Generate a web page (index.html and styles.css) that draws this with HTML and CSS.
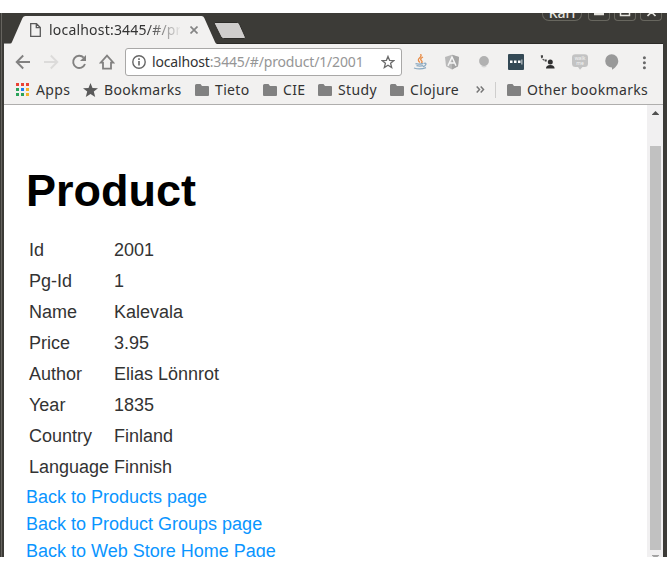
FILE: index.html
```html
<!DOCTYPE html>
<html lang="en">
<head>
<meta charset="utf-8">
<title>Product</title>
<link rel="stylesheet" href="styles.css">
</head>
<body>
<div class="window">
  <header class="titlebar">
    <div class="tab">
      <svg class="tab-shape" width="214" height="31" viewBox="0 0 214 31"><path d="M0 31V30.500H6Q7.500 30.500 8 29L18.500 5Q19.500 3 21.500 3H197.500Q199.500 3 200.300 5L211 29Q211.500 30.500 213 31Z" fill="#f2f1f0"/></svg>
      <svg class="page-icon" width="11" height="14" viewBox="0 0 11 14"><path d="M.7.7H6.5L10.3 4.5V13.3H.7ZM6.3.7V4.7H10.3" fill="none" stroke="#5a5a5a" stroke-width="1.3"/></svg>
      <span class="tab-title">localhost:3445/#/pr</span>
      <svg class="tab-close" width="8" height="8" viewBox="0 0 8 8"><path d="M.5.5 7.5 7.5M7.5.5.5 7.5" stroke="#858585" stroke-width="1.7"/></svg>
    </div>
    <svg class="new-tab" width="40" height="31" viewBox="0 0 40 31"><path d="M7.500 9.500H30.500Q31.800 9.500 32.500 11L38.300 24Q38.800 25.500 37.300 25.500H16.500Q14.800 25.500 14 24L7.500 11Q6.800 9.500 7.500 9.500Z" fill="#cfcdcc" stroke="#2d2c29" stroke-width="1"/></svg>
    <div class="controls">
      <span class="control user">Kari</span>
      <span class="control"><svg width="20" height="8"><path d="M5 1H15" stroke="#e5e4df" stroke-width="2.400"/></svg></span>
      <span class="control"><svg width="20" height="8"><path d="M5.500 0V2.500H14.500V0" fill="none" stroke="#e5e4df" stroke-width="1.500"/></svg></span>
      <span class="control"><svg width="20" height="8"><path d="M6.500 3 10.500-1 14.500 3" fill="none" stroke="#e5e4df" stroke-width="1.700"/></svg></span>
    </div>
  </header>

  <nav class="toolbar">
    <svg class="icon" viewBox="0 0 16 16"><path d="M15 8H2M8.200 1.500 1.700 8l6.500 6.500" fill="none" stroke="#828180" stroke-width="1.900"/></svg>
    <svg class="icon" viewBox="0 0 16 16"><path d="M1 8H14M7.800 1.500 14.300 8l-6.500 6.500" fill="none" stroke="#dcdbda" stroke-width="1.900"/></svg>
    <svg class="icon" viewBox="0 0 16 16"><path d="M12.700 3.700A6.100 6.100 0 1 0 14 10" fill="none" stroke="#828180" stroke-width="1.900"/><path d="M15 1V7H9Z" fill="#828180"/></svg>
    <svg class="icon home" viewBox="0 0 16 16"><path d="M8 1.600 1.600 8.700H4V14.600H12V8.700H14.400Z" fill="none" stroke="#828180" stroke-width="1.800"/></svg>
    <div class="address">
      <svg width="14" height="14" viewBox="0 0 14 14"><circle cx="7" cy="7" r="6.200" fill="none" stroke="#666" stroke-width="1.400"/><path d="M7 6V10.500M7 3.300V4.900" stroke="#666" stroke-width="1.600"/></svg>
      <span class="url"><b>localhost</b>:3445/#/product/1/2001</span>
      <svg class="star" width="14" height="14" viewBox="0 0 14 14"><path d="M7 1.400 8.600 5.300 12.900 5.600 9.600 8.300 10.700 12.500 7 10.200 3.300 12.500 4.400 8.300 1.100 5.600 5.400 5.300Z" fill="none" stroke="#6b6b6b" stroke-width="1.300"/></svg>
    </div>
    <div class="extensions">
      <svg class="icon" viewBox="0 0 16 16"><path d="M8.500 0Q10 2 7.500 4T8 8.500M11 3Q7.500 4.800 9.300 6.500T9 9" fill="none" stroke="#e88b45" stroke-width="1.300"/><path d="M3.500 9.700Q7 10.500 11 9.500M4.500 11.700Q8 12.600 11 11.700M2 14Q8 16 14 13.700M11.500 9.500Q14.500 8.600 13.800 10.500T11 12.500" fill="none" stroke="#8ba9c1" stroke-width="1.300"/></svg>
      <svg class="icon" viewBox="0 0 16 16"><path d="M8 .7 15 3 14 12.200 8 15.500 2 12.200 1 3Z" fill="#b9b9b9"/><path d="M8 .7 15 3 14 12.200 8 15.500Z" fill="#a5a5a5"/><path d="M4 11.700 8 3 12 11.700M5.600 9H10.400" fill="none" stroke="#f6f6f6" stroke-width="1.500"/></svg>
      <svg class="icon" viewBox="0 0 16 16"><path d="M5.500 10H10.500V12.500Q8 14.500 5.500 12.500Z" fill="#d5d5d5"/><circle cx="8" cy="7" r="4.900" fill="#b1b1b1"/></svg>
      <svg class="icon" viewBox="0 0 16 16"><rect width="16" height="16" rx="1" fill="#344955"/><path d="M2 6.500H4.500V9H2ZM6 6.500H8.500V9H6ZM10 6.500H12.500V9H10ZM13.500 5.500H14.300V10.500H13.500Z" fill="#fff"/></svg>
      <svg class="icon" viewBox="0 0 16 16"><path d="M1.500 2Q1.800 6 6 6.700" fill="none" stroke="#444" stroke-width="1.200" stroke-dasharray="2.300 1"/><path d="M.8 1.200H3V3.500H1ZM4.800 5.500H6.700V7.500H4.800Z" fill="#444"/><circle cx="10.300" cy="8" r="2.500" fill="#303030"/><path d="M6 14.500Q6 11 10.300 11T14.600 14.500Z" fill="#303030"/></svg>
      <svg class="icon" viewBox="0 0 16 16"><path d="M3.500.2H12.500Q16 .2 16 3.500V9.500Q16 13 12.500 13H10.500L8 15.800 6 13H3.500Q0 13 0 9.500V3.500Q0 .2 3.500.2Z" fill="#c3c3c3"/><text class="badge-text" x="8" y="5.800" text-anchor="middle">walk</text><text class="badge-text" x="8" y="11" text-anchor="middle">me</text></svg>
      <svg class="icon" viewBox="0 0 16 16"><path d="M7.600.3A6.600 6.600 0 0 1 14.300 7C14.300 10.500 11 14.200 8 15.800V13.500A6.600 6.600 0 0 1 7.600.3Z" fill="#999"/></svg>
      <svg class="icon" viewBox="0 0 16 16"><g fill="#686868"><circle cx="8.400" cy="3.700" r="1.500"/><circle cx="8.400" cy="8.700" r="1.500"/><circle cx="8.400" cy="13.700" r="1.500"/></g></svg>
    </div>
  </nav>

  <nav class="bookmarks">
    <svg width="13" height="13" viewBox="0 0 13 13"><path d="M0 0H3V3H0ZM5 0H8V3H5ZM10 0H13V3H10Z" fill="#ea4335"/><path d="M0 5H3V8H0ZM0 10H3V13H0ZM5 10H8V13H5Z" fill="#2ba35a"/><path d="M5 5H8V8H5Z" fill="#1a80f0"/><path d="M10 5H13V8H10ZM10 10H13V13H10Z" fill="#f3b32a"/></svg>
    <span>Apps</span>
    <svg width="15" height="14" viewBox="0 0 15 14"><path d="M7.500 0 9.500 4.900 15 5.200 10.800 8.600 12.200 14 7.500 11 2.800 14 4.200 8.600 0 5.200 5.500 4.900Z" fill="#5a5a5a"/></svg>
    <span>Bookmarks</span>
    <svg class="folder" viewBox="0 0 14 12"><path d="M1.500 0H5.500L7 2H13Q14 2 14 3V11Q14 12 13 12H1Q0 12 0 11V1.500Q0 0 1.500 0Z"/></svg>
    <span>Tieto</span>
    <svg class="folder" viewBox="0 0 14 12"><path d="M1.500 0H5.500L7 2H13Q14 2 14 3V11Q14 12 13 12H1Q0 12 0 11V1.500Q0 0 1.500 0Z"/></svg>
    <span>CIE</span>
    <svg class="folder" viewBox="0 0 14 12"><path d="M1.500 0H5.500L7 2H13Q14 2 14 3V11Q14 12 13 12H1Q0 12 0 11V1.500Q0 0 1.500 0Z"/></svg>
    <span>Study</span>
    <svg class="folder" viewBox="0 0 14 12"><path d="M1.500 0H5.500L7 2H13Q14 2 14 3V11Q14 12 13 12H1Q0 12 0 11V1.500Q0 0 1.500 0Z"/></svg>
    <span>Clojure</span>
    <svg width="9" height="7" viewBox="0 0 9 7"><path d="M.7.5 3.500 3.500.7 6.500M4.700.5 7.500 3.500 4.700 6.500" fill="none" stroke="#777" stroke-width="1.500"/></svg>
    <i class="separator"></i>
    <svg class="folder" viewBox="0 0 14 12"><path d="M1.500 0H5.500L7 2H13Q14 2 14 3V11Q14 12 13 12H1Q0 12 0 11V1.500Q0 0 1.500 0Z"/></svg>
    <span class="other">Other bookmarks</span>
  </nav>

  <div class="viewport">
    <main class="content">
      <h1>Product</h1>
      <table>
        <tr><td>Id</td><td>2001</td></tr>
        <tr><td>Pg-Id</td><td>1</td></tr>
        <tr><td>Name</td><td>Kalevala</td></tr>
        <tr><td>Price</td><td>3.95</td></tr>
        <tr><td>Author</td><td>Elias Lönnrot</td></tr>
        <tr><td>Year</td><td>1835</td></tr>
        <tr><td>Country</td><td>Finland</td></tr>
        <tr><td>Language</td><td>Finnish</td></tr>
      </table>
      <a href="#/products">Back to Products page</a>
      <a href="#/groups">Back to Product Groups page</a>
      <a href="#/">Back to Web Store Home Page</a>
    </main>
    <div class="scrollbar">
      <svg width="7" height="4" viewBox="0 0 7 4"><path d="M3.500 0 7 3.500V4H0V3.500Z" fill="#505050"/></svg>
      <div class="thumb"></div>
      <svg class="down" width="7" height="4" viewBox="0 0 7 4"><path d="M0 0H7V.5L3.500 4 0 .5Z" fill="#a3a3a3"/></svg>
    </div>
  </div>
</div>
</body>
</html>
```
FILE: styles.css
```css
* { box-sizing: border-box; }
body {
  margin: 0;
  background: #fff;
  overflow: hidden;
}
svg { display: block; flex: none; }

.window {
  width: 667px;
  height: 544px;
  margin-top: 13px;
  padding: 0 4px;
  overflow: hidden;
  background: linear-gradient(90deg, #3c3b37 1px, #66645f 1px, #66645f 2px, #3c3b37 2px);
  font-family: "Noto Sans", "Open Sans", sans-serif;
  color: #333;
  display: flex;
  flex-direction: column;
}

.titlebar {
  height: 31px;
  display: flex;
  flex: none;
  box-shadow: inset 0 -1px #2b2a27;
}
.tab {
  width: 203px;
  padding: 3px 0 0 26px;
  display: flex;
  align-items: center;
  position: relative;
}
.tab-shape { position: absolute; left: 0; top: 0; }
.page-icon, .tab-title, .tab-close { position: relative; }
.tab-title {
  width: 131px;
  margin-left: 8px;
  overflow: hidden;
  white-space: nowrap;
  font-size: 14px;
  line-height: 20px;
  letter-spacing: 0.2px;
  -webkit-mask-image: linear-gradient(90deg, #000 98px, transparent 133px);
  mask-image: linear-gradient(90deg, #000 98px, transparent 133px);
}
.tab-close { margin-left: 10px; }
.new-tab { position: relative; }
.controls {
  display: flex;
  gap: 4px;
  margin-left: auto;
  margin-right: 1px;
}
.control {
  width: 22px;
  height: 8px;
  border: 1px solid #68675f;
  border-top: 0;
  border-radius: 0 0 4px 4px;
  overflow: hidden;
}
.user {
  width: 40px;
  margin-right: 2px;
  border-radius: 0 0 7px 7px;
  color: #e5e4df;
  text-align: center;
  font-size: 14px;
  font-weight: 500;
  line-height: 0;
}

.toolbar {
  height: 35px;
  flex: none;
  padding: 0 0 0 11px;
  display: flex;
  align-items: center;
  gap: 12px;
  background: #f2f1f0;
}
.icon { width: 16px; height: 16px; }
.home { margin-right: -2px; }
.address {
  width: 277px;
  height: 28px;
  flex: none;
  padding: 0 6px;
  border: 1px solid #a9a8a7;
  border-radius: 3px;
  display: flex;
  align-items: center;
  background: #fff;
}
.url {
  margin-left: 6px;
  font-size: 14px;
  line-height: 20px;
  letter-spacing: -0.16px;
  color: #969696;
  white-space: nowrap;
}
.url b { color: #333; font-weight: 400; }
.star { margin-left: auto; }
.extensions { display: flex; gap: 16px; margin-left: -2px; }
.badge-text { font-size: 5px; fill: #f5f5f5; }

.bookmarks {
  height: 26px;
  flex: none;
  padding: 0 0 4px 12px;
  display: grid;
  grid-template-columns: 20px 47px 21px 91px 20px 48px 20px 35px 20px 52px 20px 66px 19px 12px 20px 140px;
  align-items: center;
  background: #f2f1f0;
  border-bottom: 1px solid #afaead;
  font-size: 14px;
  line-height: 20px;
  letter-spacing: 0.35px;
  white-space: nowrap;
}
.folder { width: 14px; height: 12px; fill: #818181; }
.separator { width: 1px; height: 16px; background: #cfcecd; }

.viewport {
  flex: 1;
  min-height: 0;
  display: flex;
  background: #fff;
  overflow: hidden;
}
.content {
  flex: 1;
  padding: 58px 0 0 22px;
  font-family: "Liberation Sans", Arial, sans-serif;
  font-size: 18px;
  line-height: 27px;
  color: #333;
}
h1 {
  margin: 0 0 16px;
  font-size: 45px;
  line-height: 55px;
  color: #000;
}
table { border-spacing: 2px; }
td { padding: 1px; }
td:first-child { width: 83px; }
.content a {
  display: block;
  color: #0a95ff;
  text-decoration: none;
}
.scrollbar {
  width: 16px;
  flex: none;
  padding-top: 6px;
  background: #f1f0f1;
  display: flex;
  flex-direction: column;
  align-items: center;
}
.thumb {
  width: 11px;
  height: 404px;
  margin-top: 31px;
  flex: none;
  background: #c1c1c1;
}
.down { margin-top: 5px; }
```
